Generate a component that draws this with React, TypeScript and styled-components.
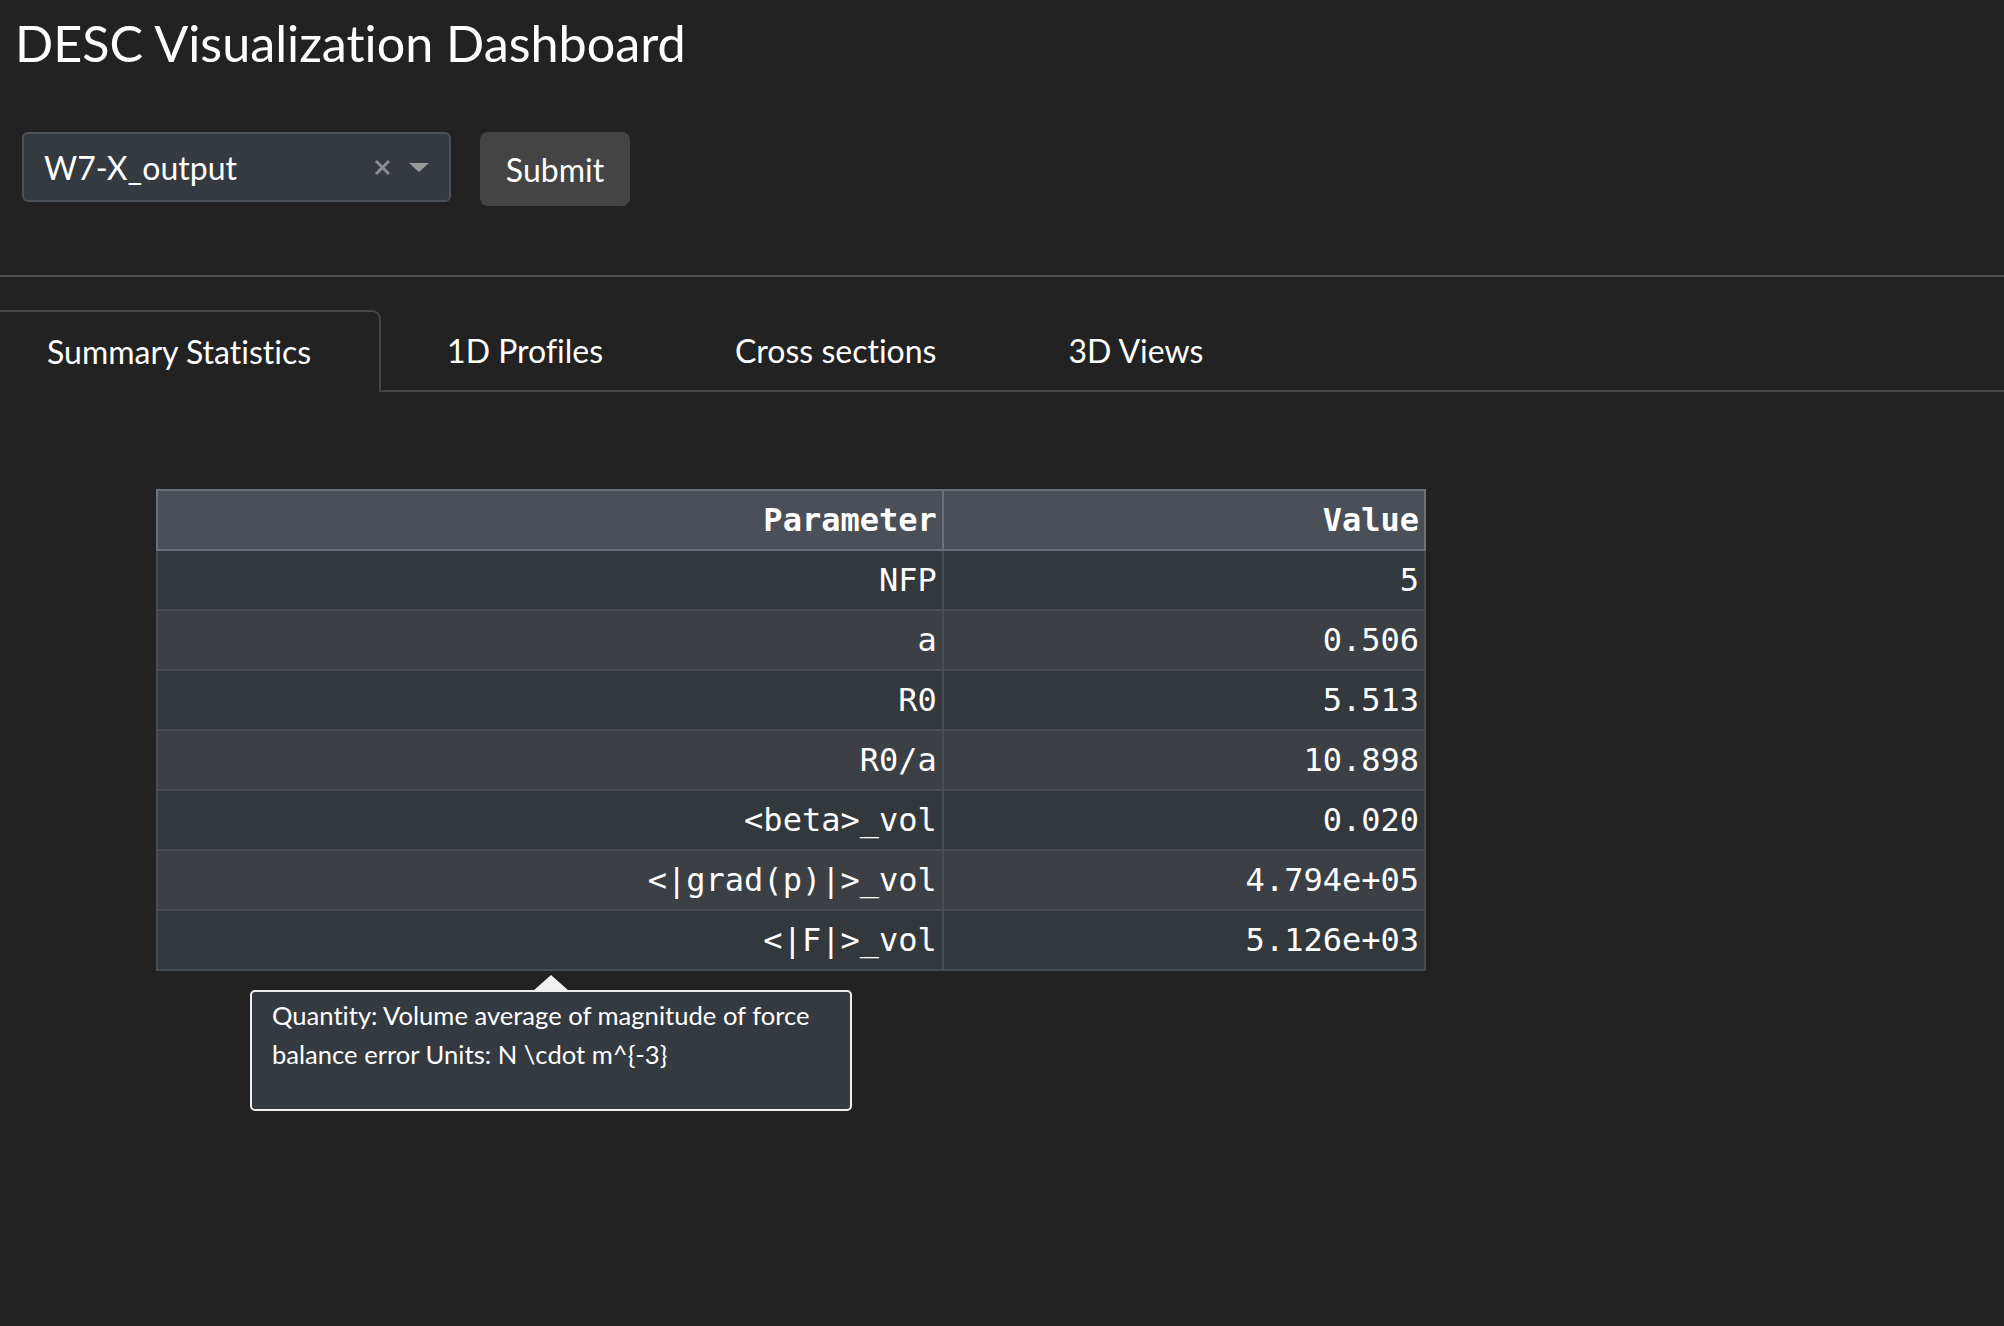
import React from "react";
import styled, { createGlobalStyle } from "styled-components";

const GlobalStyle = createGlobalStyle`
  html, body {
    margin: 0;
    padding: 0;
    background: #222222;
    color: #ffffff;
    font-family: Lato, "Open Sans", "Liberation Sans", sans-serif;
    font-variant-ligatures: none;
  }
  #root { min-height: 1326px; overflow: hidden; }
`;

const Page = styled.div`
  display: flex;
  flex-direction: column;
  min-height: 1326px;
`;

const Title = styled.h1`
  margin: 13px 0 0 15px;
  font-size: 50.3px;
  font-weight: 400;
  line-height: 1.2;
  color: #ffffff;
`;

const Controls = styled.div`
  display: flex;
  align-items: flex-start;
  gap: 29px;
  margin: 59px 0 0 22px;
`;

const SelectBox = styled.div`
  box-sizing: border-box;
  width: 429px;
  height: 70px;
  display: flex;
  align-items: center;
  padding: 0 20px 0 20px;
  background: #343a40;
  border: 2px solid #4b5157;
  border-radius: 6px;
`;

const SelectValue = styled.span`
  flex: 1;
  font-size: 32px;
  color: #ffffff;
`;

const ClearIcon = styled.span`
  display: flex;
  align-items: center;
  margin-right: 18px;
`;

const Caret = styled.span`
  width: 0;
  height: 0;
  border-left: 10px solid transparent;
  border-right: 10px solid transparent;
  border-top: 9px solid #9a9a9a;
`;

const SubmitButton = styled.button`
  box-sizing: border-box;
  width: 150px;
  height: 74px;
  border: none;
  border-radius: 8px;
  background: #444444;
  color: #ffffff;
  font-family: Lato, "Liberation Sans", sans-serif;
  font-size: 32px;
  padding: 0;
`;

const Rule = styled.hr`
  width: 100%;
  margin: 69px 0 0 0;
  border: none;
  border-top: 2px solid #505050;
`;

const TabBar = styled.div`
  display: flex;
  margin: 33px 0 0 -19px;
  height: 82px;
`;

const Tab = styled.div<{ $active?: boolean }>`
  box-sizing: border-box;
  height: 82px;
  display: flex;
  align-items: center;
  padding: ${(p) => (p.$active ? "0 68px 2px 64px" : "0 66px")};
  font-size: 32px;
  color: #ffffff;
  ${(p) =>
    p.$active
      ? `
    border: 2px solid #464646;
    border-bottom: none;
    border-radius: 9px 9px 0 0;
  `
      : `
    border-bottom: 2px solid #464646;
  `}
`;

const TabFill = styled.div`
  flex: 1;
  border-bottom: 2px solid #464646;
`;

const Content = styled.div`
  position: relative;
  margin: 97px 0 0 156px;
  width: 1270px;
`;

const Table = styled.table`
  width: 1270px;
  border-collapse: collapse;
  font-family: "DejaVu Sans Mono", "Liberation Mono", monospace;
  font-size: 32px;
  color: #ffffff;
`;

const HeadCell = styled.th<{ $w: number }>`
  box-sizing: border-box;
  width: ${(p) => p.$w}px;
  height: 60px;
  padding: 0 5px;
  text-align: right;
  font-weight: 700;
  background: #4b5058;
  border: 2px solid #6b7179;
`;

const Row = styled.tr<{ $alt: boolean }>`
  background: ${(p) => (p.$alt ? "#3c4045" : "#33383c")};
`;

const Cell = styled.td`
  box-sizing: border-box;
  height: 60px;
  padding: 0 5px;
  text-align: right;
  border: 2px solid #484d53;
`;

const Tooltip = styled.div`
  position: absolute;
  left: 94px;
  top: 501px;
  box-sizing: border-box;
  width: 602px;
  height: 121px;
  padding: 4px 20px;
  background: #343a40;
  border: 2px solid #eeeeee;
  border-radius: 5px;
  font-size: 25.6px;
  line-height: 1.5;
  color: #ffffff;
`;

const TooltipArrow = styled.span`
  position: absolute;
  left: 50%;
  top: -17px;
  margin-left: -18px;
  width: 0;
  height: 0;
  border-left: 18px solid transparent;
  border-right: 18px solid transparent;
  border-bottom: 16px solid #f2f2f2;
`;

const rows: [string, string][] = [
  ["NFP", "5"],
  ["a", "0.506"],
  ["R0", "5.513"],
  ["R0/a", "10.898"],
  ["<beta>_vol", "0.020"],
  ["<|grad(p)|>_vol", "4.794e+05"],
  ["<|F|>_vol", "5.126e+03"],
];

export default function App() {
  return (
    <Page>
      <GlobalStyle />
      <Title>DESC Visualization Dashboard</Title>
      <Controls>
        <SelectBox>
          <SelectValue>W7-X_output</SelectValue>
          <ClearIcon>
            <svg width="17" height="17" viewBox="0 0 17 17">
              <path d="M2 2 L15 15 M15 2 L2 15" stroke="#8c8c8c" strokeWidth="3" />
            </svg>
          </ClearIcon>
          <Caret />
        </SelectBox>
        <SubmitButton>Submit</SubmitButton>
      </Controls>
      <Rule />
      <TabBar>
        <Tab $active>Summary Statistics</Tab>
        <Tab>1D Profiles</Tab>
        <Tab>Cross sections</Tab>
        <Tab>3D Views</Tab>
        <TabFill />
      </TabBar>
      <Content>
        <Table>
          <thead>
            <tr>
              <HeadCell $w={787}>Parameter</HeadCell>
              <HeadCell $w={483}>Value</HeadCell>
            </tr>
          </thead>
          <tbody>
            {rows.map(([k, v], i) => (
              <Row key={k} $alt={i % 2 === 1}>
                <Cell>{k}</Cell>
                <Cell>{v}</Cell>
              </Row>
            ))}
          </tbody>
        </Table>
        <Tooltip>
          <TooltipArrow />
          Quantity: Volume average of magnitude of force balance error Units: N \cdot m^{"{"}-3{"}"}
        </Tooltip>
      </Content>
    </Page>
  );
}
